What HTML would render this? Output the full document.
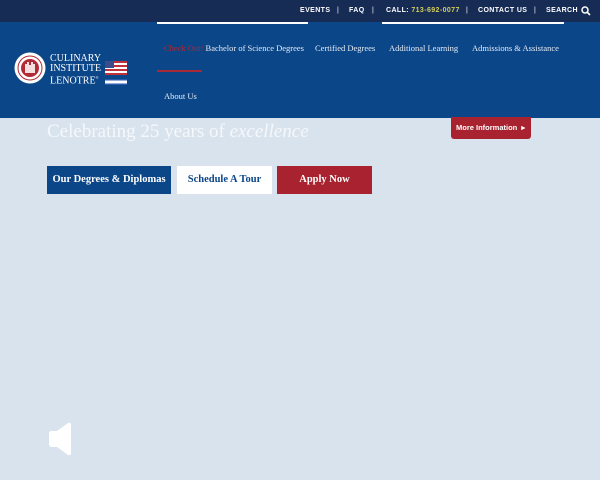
<!DOCTYPE html>
<html><head><style>
*{margin:0;padding:0;box-sizing:border-box}
body{width:600px;height:480px;background:#d9e3ee;font-family:"Liberation Serif",serif;position:relative;overflow:hidden}
.top{position:absolute;left:0;top:0;width:600px;height:22px;background:#172c55;color:#fff;font-family:"Liberation Sans",sans-serif;font-size:7px;font-weight:bold;letter-spacing:.4px}
.top span{position:absolute;top:7px;white-space:nowrap}
.hdr{position:absolute;left:0;top:22px;width:600px;height:96px;background:#0b4688}
.line{position:absolute;top:22px;height:2px;background:#fff}
.nav{position:absolute;color:#e6ecf5;font-size:8.5px;white-space:nowrap}
.btn{position:absolute;top:166px;height:28px;font-size:10.5px;font-weight:bold;text-align:center;line-height:28px;white-space:nowrap}
</style></head><body>
<div class="top">
<span style="left:300px">EVENTS</span><span style="left:337px;font-weight:normal">|</span>
<span style="left:349px">FAQ</span><span style="left:372px;font-weight:normal">|</span>
<span style="left:386px">CALL: <b style="color:#d4cf5a">713-692-0077</b></span><span style="left:466px;font-weight:normal">|</span>
<span style="left:478px">CONTACT US</span><span style="left:534px;font-weight:normal">|</span>
<span style="left:546px">SEARCH</span>
<svg style="position:absolute;left:581px;top:6px" width="10" height="10" viewBox="0 0 10 10"><circle cx="4" cy="4" r="3" stroke="#fff" stroke-width="1.5" fill="none"/><path d="M6.2 6.2L9 9" stroke="#fff" stroke-width="1.6"/></svg>
</div>
<div class="hdr"></div>
<div class="line" style="left:157px;width:151px"></div>
<div class="line" style="left:382px;width:182px"></div>
<svg style="position:absolute;left:14px;top:52px" width="32" height="32" viewBox="0 0 32 32"><circle cx="16" cy="16" r="15.5" fill="#fff"/><circle cx="16" cy="16" r="12" fill="none" stroke="#b22a34" stroke-width="1"/><circle cx="16" cy="16" r="9" fill="#b22a34"/><path d="M11 21V12h2v-2h2v3h2v-3h2v2h2v9z" fill="#fff" opacity=".85"/></svg>
<div style="position:absolute;left:50px;top:54px;color:#fff;font-size:10px;line-height:9.5px">CULINARY<br>INSTITUTE<br>LENOTRE<sup style="font-size:4px">®</sup></div>
<svg style="position:absolute;left:105px;top:61px" width="22" height="14" viewBox="0 0 22 14"><rect width="22" height="14" fill="#fff"/><g fill="#c0303c"><rect y="0" width="22" height="2"/><rect y="4" width="22" height="2"/><rect y="8" width="22" height="2"/><rect y="12" width="22" height="2"/></g><rect width="9" height="7" fill="#3a4d8a"/></svg>
<svg style="position:absolute;left:105px;top:79px" width="22" height="6" viewBox="0 0 22 6"><rect width="22" height="6" fill="#fff"/><rect width="22" height="1.5" fill="#2a5ab0"/><rect y="4.5" width="22" height="1.5" fill="#2a5ab0"/></svg>
<div class="nav" style="left:164px;top:43px"><span style="color:#a82a36">Check Out!</span> Bachelor of Science Degrees</div>
<div class="nav" style="left:315px;top:43px">Certified Degrees</div>
<div class="nav" style="left:389px;top:43px">Additional Learning</div>
<div class="nav" style="left:472px;top:43px">Admissions &amp; Assistance</div>
<div style="position:absolute;left:157px;top:70px;width:45px;height:2px;background:#a82a36"></div>
<div class="nav" style="left:164px;top:91px">About Us</div>
<div style="position:absolute;left:47px;top:121px;color:#f5f8fb;font-size:19px;white-space:nowrap">Celebrating 25 years of <i>excellence</i></div>
<div style="position:absolute;left:451px;top:117px;width:80px;height:22px;background:#a8222f;border-radius:0 0 3px 3px;color:#fff;font-family:'Liberation Sans',sans-serif;font-size:7.5px;font-weight:bold;line-height:22px;padding-left:5px">More Information &nbsp;▸</div>
<div class="btn" style="left:47px;width:124px;background:#0b4688;color:#fff">Our Degrees &amp; Diplomas</div>
<div class="btn" style="left:177px;width:95px;background:#fff;color:#0b4688">Schedule A Tour</div>
<div class="btn" style="left:277px;width:95px;background:#a8222f;color:#fff">Apply Now</div>
<svg style="position:absolute;left:47px;top:422px" width="25" height="34" viewBox="0 0 25 34"><path d="M2 11Q2 9 5 9H10L21 1Q24 0 24 3V31Q24 34 21 33L10 25H5Q2 25 2 22Z" fill="#fff"/></svg>
</body></html>
